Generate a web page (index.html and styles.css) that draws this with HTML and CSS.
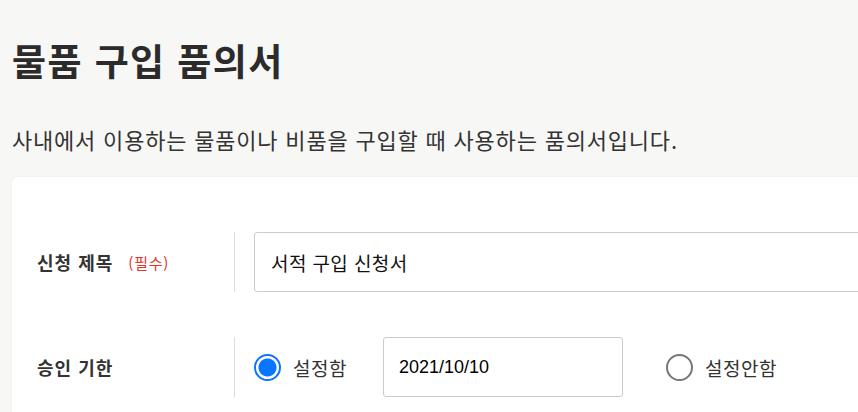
FILE: index.html
```html
<!DOCTYPE html>
<html lang="ko">
<head>
<meta charset="utf-8">
<link rel="stylesheet" href="styles.css">
</head>
<body>
<main class="page">
  <h1 class="title">물품 구입 품의서</h1>
  <p class="desc">사내에서 이용하는 물품이나 비품을 구입할 때 사용하는 품의서입니다.</p>
  <section class="card">
    <div class="row">
      <div class="label">신청 제목 <span class="req">(필수)</span></div>
      <div class="field">
        <div class="input wide">서적 구입 신청서</div>
      </div>
    </div>
    <div class="row">
      <div class="label">승인 기한</div>
      <div class="field">
        <span class="radio on"></span>
        <span class="opt">설정함</span>
        <div class="input date">2021/10/10</div>
        <span class="radio"></span>
        <span class="opt">설정안함</span>
      </div>
    </div>
  </section>
</main>
</body>
</html>
```

FILE: styles.css
```css
html, body {
  margin: 0;
  padding: 0;
  background: #f7f7f5;
  font-family: "Noto Sans CJK KR", "Noto Sans", sans-serif;
  color: #333;
  overflow: hidden;
  height: 412px;
}
.page {
  padding: 0 0 0 12px;
  width: 1000px;
}
.title {
  margin: 0;
  padding-top: 33px;
  font-size: 37px;
  line-height: 54px;
  letter-spacing: 1.4px;
  font-weight: 700;
  color: #2b2b2b;
}
.desc {
  margin: 0;
  padding-top: 37px;
  font-size: 22px;
  line-height: 30px;
  letter-spacing: 0.8px;
  color: #333;
}
.card {
  margin-top: 23px;
  background: #fff;
  border-radius: 6px 0 0 0;
  box-shadow: 0 0 2px rgba(0,0,0,0.08);
  padding: 55px 0 15px 25px;
  display: flex;
  flex-direction: column;
  gap: 45px;
}
.row {
  display: grid;
  grid-template-columns: 197px 1fr;
  align-items: stretch;
}
.label {
  display: flex;
  align-items: center;
  font-size: 18px;
  letter-spacing: 1px;
  font-weight: 700;
  color: #333;
}
.req {
  margin-left: 15px;
  font-size: 15px;
  letter-spacing: 0.8px;
  font-weight: 400;
  color: #e0392b;
}
.field {
  border-left: 1px solid #ddd;
  padding-left: 19px;
  display: flex;
  align-items: center;
  height: 60px;
}
.input {
  box-sizing: border-box;
  height: 60px;
  border: 1px solid #ccc;
  border-radius: 3px;
  display: flex;
  align-items: center;
  padding-left: 16px;
  font-size: 19px;
  letter-spacing: 0.4px;
  color: #111;
}
.wide {
  flex: 1;
}
.date {
  width: 240px;
  padding-left: 15px;
  font-family: "Liberation Sans", Arial, sans-serif;
  font-size: 18px;
  letter-spacing: 0;
  color: #000;
}
.radio {
  box-sizing: border-box;
  width: 27px;
  height: 27px;
  border-radius: 50%;
  border: 2px solid #767676;
  flex: none;
}
.radio.on {
  border: 2px solid #0a75ff;
  background: radial-gradient(circle, #0a75ff 0 8.5px, #fff 9.5px);
}
.opt {
  margin-left: 12px;
  font-size: 19px;
  letter-spacing: 0.5px;
  color: #333;
  margin-right: 36px;
}
.date + .radio {
  margin-left: 43px;
}
```
